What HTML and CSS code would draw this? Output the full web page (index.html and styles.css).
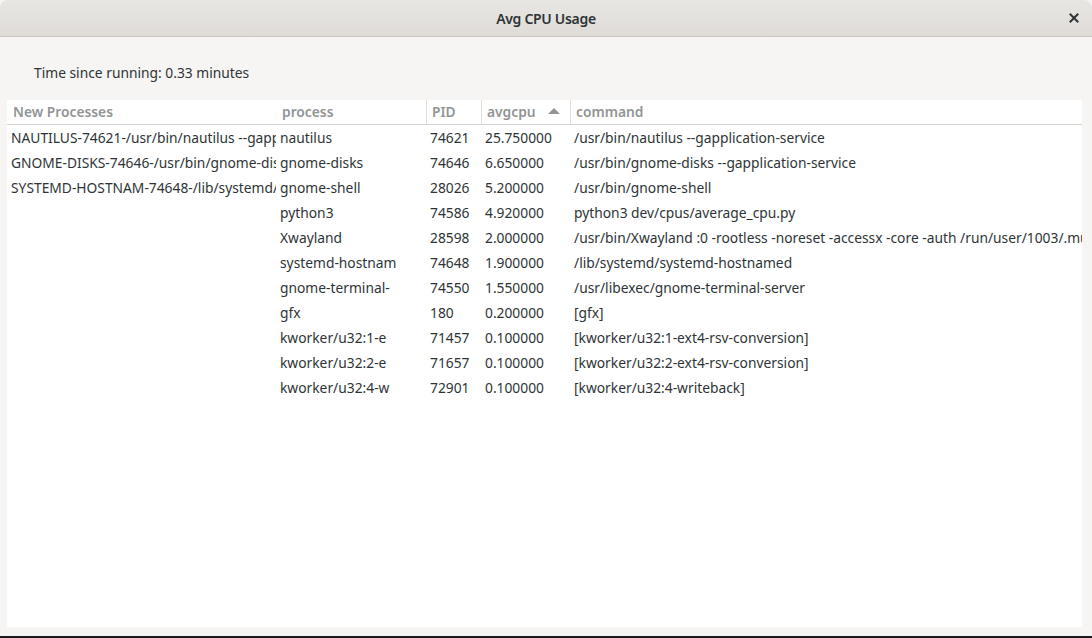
FILE: index.html
```html
<!DOCTYPE html>
<html>
<head>
<meta charset="utf-8">
<link rel="stylesheet" href="styles.css">
</head>
<body>
<div class="window">
  <div class="titlebar">
    <span class="title">Avg CPU Usage</span>
    <span class="close"><svg width="10" height="10" viewBox="0 0 10 10"><path d="M1.5 1.5 L8.5 8.5 M8.5 1.5 L1.5 8.5" stroke="#2e3436" stroke-width="2" stroke-linecap="square"/></svg></span>
  </div>
  <div class="content">
    <div class="timer">Time since running: 0.33 minutes</div>
    <div class="tree">
      <div class="row header">
        <div class="c c0">New Processes</div>
        <div class="c c1">process</div>
        <div class="c c2 sep">PID</div>
        <div class="c c3 sep">avgcpu <span class="arrow"></span></div>
        <div class="c c4 sep">command</div>
      </div>
      <div class="row"><div class="c c0">NAUTILUS-74621-/usr/bin/nautilus --gapplication-service</div><div class="c c1">nautilus</div><div class="c c2">74621</div><div class="c c3">25.750000</div><div class="c c4">/usr/bin/nautilus --gapplication-service</div></div>
      <div class="row"><div class="c c0">GNOME-DISKS-74646-/usr/bin/gnome-disks --gapplication-service</div><div class="c c1">gnome-disks</div><div class="c c2">74646</div><div class="c c3">6.650000</div><div class="c c4">/usr/bin/gnome-disks --gapplication-service</div></div>
      <div class="row"><div class="c c0">SYSTEMD-HOSTNAM-74648-/lib/systemd/systemd-hostnamed</div><div class="c c1">gnome-shell</div><div class="c c2">28026</div><div class="c c3">5.200000</div><div class="c c4">/usr/bin/gnome-shell</div></div>
      <div class="row"><div class="c c0"></div><div class="c c1">python3</div><div class="c c2">74586</div><div class="c c3">4.920000</div><div class="c c4">python3 dev/cpus/average_cpu.py</div></div>
      <div class="row"><div class="c c0"></div><div class="c c1">Xwayland</div><div class="c c2">28598</div><div class="c c3">2.000000</div><div class="c c4">/usr/bin/Xwayland :0 -rootless -noreset -accessx -core -auth /run/user/1003/.mutter-Xwaylandauth</div></div>
      <div class="row"><div class="c c0"></div><div class="c c1">systemd-hostnam</div><div class="c c2">74648</div><div class="c c3">1.900000</div><div class="c c4">/lib/systemd/systemd-hostnamed</div></div>
      <div class="row"><div class="c c0"></div><div class="c c1">gnome-terminal-</div><div class="c c2">74550</div><div class="c c3">1.550000</div><div class="c c4">/usr/libexec/gnome-terminal-server</div></div>
      <div class="row"><div class="c c0"></div><div class="c c1">gfx</div><div class="c c2">180</div><div class="c c3">0.200000</div><div class="c c4">[gfx]</div></div>
      <div class="row"><div class="c c0"></div><div class="c c1">kworker/u32:1-e</div><div class="c c2">71457</div><div class="c c3">0.100000</div><div class="c c4">[kworker/u32:1-ext4-rsv-conversion]</div></div>
      <div class="row"><div class="c c0"></div><div class="c c1">kworker/u32:2-e</div><div class="c c2">71657</div><div class="c c3">0.100000</div><div class="c c4">[kworker/u32:2-ext4-rsv-conversion]</div></div>
      <div class="row"><div class="c c0"></div><div class="c c1">kworker/u32:4-w</div><div class="c c2">72901</div><div class="c c3">0.100000</div><div class="c c4">[kworker/u32:4-writeback]</div></div>
    </div>
  </div>
  <div class="bottom"></div>
</div>
</body>
</html>
```
FILE: styles.css
```css
html, body {
  margin: 0;
  padding: 0;
  background: #1e1e1e;
}
body {
  width: 1092px;
  height: 638px;
  overflow: hidden;
  font-family: "Noto Sans", "DejaVu Sans", sans-serif;
  font-size: 13.8px;
  color: #2e3436;
}
.window {
  width: 1092px;
  height: 638px;
  display: flex;
  flex-direction: column;
  background: #f6f5f4;
}
.titlebar {
  height: 36px;
  flex: none;
  border-bottom: 1px solid #cdc7c2;
  background: linear-gradient(#e8e6e3, #dfdcd8);
  border-radius: 8px 8px 0 0;
  display: flex;
  align-items: center;
  justify-content: center;
  position: relative;
}
.title {
  font-weight: 600;
  font-size: 14px;
  color: #2e3436;
  letter-spacing: -0.3px;
}
.close {
  position: absolute;
  right: 13px;
  top: 13px;
  width: 10px;
  height: 10px;
  display: flex;
}
.content {
  flex: 1;
  display: flex;
  flex-direction: column;
  padding: 0 10px 9px 7px;
}
.timer {
  padding: 26px 0 0 27px;
  height: 37px;
  box-sizing: border-box;
  line-height: 20px;
  margin-bottom: 26px;
}
.tree {
  flex: 1;
  background: #ffffff;
  overflow: hidden;
}
.row {
  display: flex;
  height: 25px;
  align-items: center;
  white-space: nowrap;
}
.row.header {
  height: 24px;
  border-bottom: 1px solid #d8d4d0;
  color: #929595;
  font-weight: 600;
}
.header .c {
  padding-bottom: 2px;
}
.c {
  flex: none;
  overflow: hidden;
  box-sizing: border-box;
  padding-left: 4px;
  height: 100%;
  display: flex;
  align-items: center;
}
.header .c {
  padding-left: 6px;
}
.c0 { width: 269px; }
.c1 { width: 150px; }
.c2 { width: 55px; }
.c3 { width: 89px; }
.c4 { flex: 1; }
.header .sep {
  border-left: 1px solid #e2dfdc;
  padding-left: 5px;
}
.header .c3 {
  justify-content: space-between;
  padding-right: 10px;
}
.arrow {
  width: 0;
  height: 0;
  border-left: 6px solid transparent;
  border-right: 6px solid transparent;
  border-bottom: 6px solid #929595;
}
.bottom {
  height: 2px;
  flex: none;
  background: #1b1b1b;
}
```
